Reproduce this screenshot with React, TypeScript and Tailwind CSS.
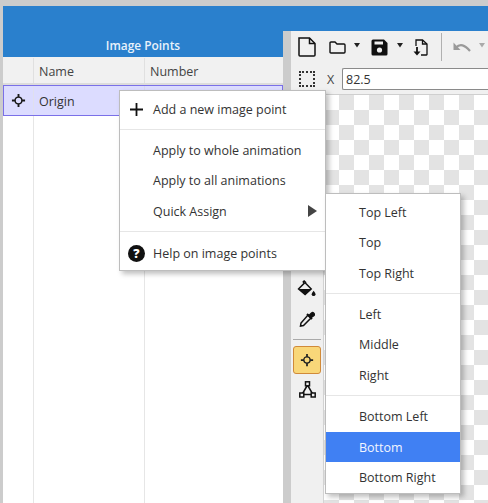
import React from "react";

const Crosshair = ({ className = "", size = 15 }: { className?: string; size?: number }) => (
  <svg viewBox="0 0 16 16" width={size} height={size} className={className} fill="none" stroke="currentColor" strokeWidth="1.5">
    <circle cx="8" cy="8" r="3.6" />
    <path d="M8 1V4.5M8 11.5V15M1 8H4.5M11.5 8H15" strokeWidth="2" />
  </svg>
);

const Caret = ({ ml, color = "#222" }: { ml: string; color?: string }) => (
  <svg width="6" height="5" viewBox="0 0 6 5" className={`${ml} mt-[-3px]`}><path d="M0 0H6L3 4.5Z" fill={color} /></svg>
);

const Row = ({ children, icon, active, right, h = "h-[30.4px]" }: { children: React.ReactNode; icon?: React.ReactNode; active?: boolean; right?: React.ReactNode; h?: string }) => (
  <div className={`flex ${h} items-center ${active ? "bg-[#4080f3] text-[#f2f6ff]" : "text-[#333]"}`}>
    <div className="flex w-[33px] shrink-0 items-center justify-center">{icon}</div>
    <div className="flex-1 pt-[2px]">{children}</div>
    {right}
  </div>
);

const Divider = () => (
  <div className="flex h-[11px] items-center"><div className="h-px w-full bg-[#e6e6e6]" /></div>
);

export default function App() {
  return (
    <div className="relative flex h-[503px] w-[488px] flex-col overflow-hidden bg-[#cccccc] pt-[6px] font-['Open_Sans','Noto_Sans',sans-serif] text-[12.5px] text-[#333]">
      <div className="ml-[3px] h-[25px] shrink-0 bg-[#2a80cd]" />
      <div className="ml-[3px] flex min-h-0 flex-1">
        <div className="flex w-[280px] shrink-0 flex-col bg-white">
          <div className="flex h-[26px] shrink-0 items-end justify-center bg-[#2a80cd] pb-[2px] text-[11.9px] font-semibold text-[#e8f2fb]">Image Points</div>
          <div className="flex h-[28px] shrink-0 border-b-2 border-[#dcdcdc] bg-[#f1f1f1] pt-[1px] text-[#444]">
            <div className="w-[31px] border-r border-[#e0e0e0]" />
            <div className="flex w-[111px] items-center border-r border-[#e0e0e0] pl-[5px] pt-[3px]">Name</div>
            <div className="flex flex-1 items-center pl-[5px] pt-[3px]">Number</div>
          </div>
          <div className="flex h-[31px] shrink-0 border border-[#7a70e8] bg-[#dcdcff]">
            <div className="flex w-[30px] items-center justify-center border-r border-[#e0e0ee] text-[#1a1a1a]"><Crosshair /></div>
            <div className="flex w-[111px] items-center border-r border-[#d8d8ee] pl-[5px] pt-[4px]">Origin</div>
          </div>
          <div className="flex flex-1">
            <div className="w-[31px] border-r border-[#e6e6e6]" />
            <div className="w-[111px] border-r border-[#e6e6e6]" />
          </div>
        </div>
        <div className="w-[8px] shrink-0" />
        <div className="flex min-w-0 flex-1 flex-col">
          <div className="flex h-[64px] shrink-0 flex-col border-b border-[#cfcfcf] bg-[#f0f0f0]">
            <div className="flex h-[32px] shrink-0 items-center pl-[7px] text-black">
              <svg width="18" height="20" viewBox="0 0 18 20" fill="none" stroke="#111" strokeWidth="1.5"><path d="M1 1H11.5L17 6.5V18Q17 19 16 19H2Q1 19 1 18Z" /><path d="M11.5 1V6.5H17" /></svg>
              <svg width="17" height="13" viewBox="0 0 17 13" fill="none" stroke="#111" strokeWidth="1.4" className="ml-[13px]"><path d="M1 2Q1 1 2 1H6L8 3H15Q16 3 16 4V11Q16 12 15 12H2Q1 12 1 11Z" /></svg>
              <Caret ml="ml-[8px]" />
              <svg width="17" height="17" viewBox="0 0 17 17" className="ml-[11px]"><path d="M0.5 2Q0.5 0.5 2 0.5H13L16.5 4V15Q16.5 16.5 15 16.5H2Q0.5 16.5 0.5 15Z" fill="#111" /><rect x="3.5" y="2.5" width="8.5" height="3" fill="#f0f0f0" /><circle cx="8.5" cy="11" r="2.6" fill="#f0f0f0" /></svg>
              <Caret ml="ml-[9px]" />
              <svg width="15" height="17" viewBox="0 0 15 17" fill="none" stroke="#111" strokeWidth="1.3" className="ml-[10px]"><path d="M3 7V1H9.5L14 5V15.5Q14 16 13.5 16H8" /><path d="M9.5 1V5H14" /><path d="M4 8V14" strokeWidth="1.8" /><path d="M0.5 12.5H7.5L4 16.5Z" fill="#111" stroke="none" /></svg>
              <div className="ml-[13px] h-[28px] w-px bg-[#b0b0b0]" />
              <svg width="18" height="10" viewBox="0 0 18 10" fill="none" stroke="#9a9a9a" strokeWidth="2.2" className="ml-[11px]"><path d="M3 5.5Q9 -0.5 17 9" /><path d="M0.5 0.5V8H7.5Z" fill="#9a9a9a" stroke="none" /></svg>
              <Caret ml="ml-[8px]" color="#aaa" />
            </div>
            <div className="mt-[4px] flex h-[24px] shrink-0 items-center pl-[8px]">
              <div className="h-[16px] w-[16px] border-2 border-dotted border-[#333]" />
              <span className="ml-[12px] w-[8px] pt-[2px] text-[#444]">X</span>
              <div className="ml-[7px] flex h-[22px] flex-1 items-center rounded-l-[2px] border border-r-0 border-[#8a8a8a] bg-white pl-[3px] pt-[2px]">82.5</div>
            </div>
          </div>
          <div className="flex min-h-0 flex-1">
            <div className="flex w-[33px] shrink-0 flex-col items-center border-r border-[#d4d4d4] bg-[#f0f0f0] pt-[185px]">
              <svg width="20" height="17" viewBox="0 0 20 18" fill="#111"><path d="M7 1L8.5 2.5L8 3L14.5 9.5L8 15.5L1 9.5L7 3.5L6 2Z" fill="none" stroke="#111" strokeWidth="1.5" /><path d="M1.5 9.5H14L8 15.5Z" /><path d="M17 11.5Q19 14 19 15A2 2 0 0 1 15 15Q15 14 17 11.5Z" /></svg>
              <svg width="16" height="16" viewBox="0 0 16 16" className="mt-[14px]" fill="none" stroke="#111" strokeWidth="1.5"><path d="M9 4L12 7L4.5 14.5L1.5 15L2 12Z" /><path d="M8 3L13 8" strokeWidth="2" /><path d="M10 4.5L12.5 2A1.8 1.8 0 0 1 15 4.5L12 6.5Z" fill="#111" /></svg>
              <div className="mt-[12px] h-px w-[28px] shrink-0 bg-[#aaa]" />
              <div className="mt-[6px] flex h-[28px] w-[28px] shrink-0 items-center justify-center rounded-[3px] border border-[#d08a3a] bg-[#f9d779] text-[#222]"><Crosshair size={14} /></div>
              <svg width="17" height="17" viewBox="0 0 17 17" className="mt-[7px]" fill="none" stroke="#111" strokeWidth="1.5"><path d="M8.5 4L3 13.5H14Z" /><rect x="6.5" y="0.8" width="4" height="4" fill="#f0f0f0" /><rect x="0.8" y="12" width="4" height="4" fill="#f0f0f0" /><rect x="12.2" y="12" width="4" height="4" fill="#f0f0f0" /></svg>
            </div>
            <div className="flex-1 bg-[conic-gradient(#e3e3e3_25%,#ffffff_0_50%,#e3e3e3_0_75%,#ffffff_0)] bg-[length:30px_30px] bg-[position:0_0]" />
          </div>
        </div>
      </div>

      <div className="absolute left-[119px] top-[90px] h-[181px] w-[207px] border border-[#bdbdbd] bg-white pt-[3px] shadow-[3px_3px_5px_rgba(0,0,0,0.25)]">
        <Row h="h-[30px]" icon={<svg width="13" height="13" viewBox="0 0 13 13" stroke="#111" strokeWidth="1.8"><path d="M6.5 0V13M0 6.5H13" /></svg>}>Add a new image point</Row>
        <Divider />
        <Row>Apply to whole animation</Row>
        <Row>Apply to all animations</Row>
        <Row right={<svg width="9" height="12" viewBox="0 0 9 12" className="mr-[8px]"><path d="M0 0L9 6L0 12Z" fill="#444" /></svg>}>Quick Assign</Row>
        <Divider />
        <div className="mt-[1px]">
          <Row icon={<svg width="17" height="17" viewBox="0 0 17 17"><circle cx="8.5" cy="8.5" r="8.5" fill="#111" /><text x="8.5" y="13" fontSize="12.5" fontWeight="800" textAnchor="middle" fill="#fff" fontFamily="Open Sans">?</text></svg>}>Help on image points</Row>
        </div>
      </div>

      <div className="absolute left-[325px] top-[193px] h-[301px] w-[136px] border border-[#bdbdbd] bg-white pt-[3px] shadow-[3px_3px_5px_rgba(0,0,0,0.25)]">
        <Row>Top Left</Row>
        <Row>Top</Row>
        <Row>Top Right</Row>
        <Divider />
        <Row>Left</Row>
        <Row>Middle</Row>
        <Row>Right</Row>
        <Divider />
        <Row>Bottom Left</Row>
        <Row active>Bottom</Row>
        <Row>Bottom Right</Row>
      </div>
    </div>
  );
}
